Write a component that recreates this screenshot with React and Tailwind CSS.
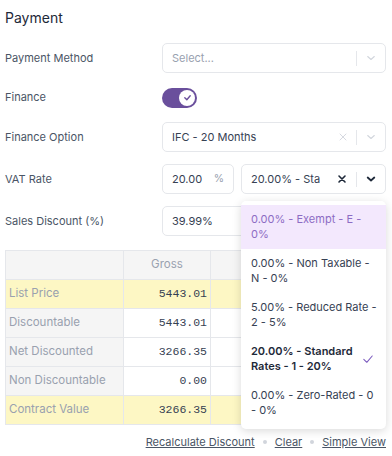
import React from 'react';

const rows = [
  { label: 'List Price', gross: '5443.01', highlight: true },
  { label: 'Discountable', gross: '5443.01' },
  { label: 'Net Discounted', gross: '3266.35' },
  { label: 'Non Discountable', gross: '0.00' },
  { label: 'Contract Value', gross: '3266.35', highlight: true },
];

const vatOptions = [
  { label: '0.00% - Exempt - E - 0%', active: true },
  { label: '0.00% - Non Taxable - N - 0%' },
  { label: '5.00% - Reduced Rate - 2 - 5%' },
  { label: '20.00% - Standard Rates - 1 - 20%', selected: true },
  { label: '0.00% - Zero-Rated - 0 - 0%' },
];

function Chevron({ dark }) {
  return (
    <svg width="12" height="12" viewBox="0 0 20 20" className={dark ? 'text-gray-800' : 'text-gray-300'}>
      <path
        d="M4.5 7.5 L10 12.5 L15.5 7.5"
        fill="none"
        stroke="currentColor"
        strokeWidth={dark ? 3 : 1.8}
        strokeLinecap="round"
        strokeLinejoin="round"
      />
    </svg>
  );
}

function Cross({ dark }) {
  return (
    <svg width="10" height="10" viewBox="0 0 20 20" className={dark ? 'text-gray-800' : 'text-gray-300'}>
      <path
        d="M4 4 L16 16 M16 4 L4 16"
        fill="none"
        stroke="currentColor"
        strokeWidth={dark ? 3.2 : 1.8}
        strokeLinecap="round"
      />
    </svg>
  );
}

function SelectBox({ value, placeholder, clearable, open, className = '' }) {
  return (
    <div className={`flex h-[30px] min-w-0 items-center rounded-[5px] border border-gray-200 bg-white pl-[9px] ${className}`}>
      <div className={`min-w-0 flex-1 overflow-hidden whitespace-nowrap text-[11px] ${value ? 'text-gray-700' : 'text-gray-400'}`}>
        {value || placeholder}
      </div>
      {clearable && (
        <div className={`flex shrink-0 items-center justify-center ${open ? 'w-[32px] pl-[4px]' : 'w-[26px]'}`}>
          <Cross dark={open} />
        </div>
      )}
      <div className="h-[15px] w-px shrink-0 bg-gray-200" />
      <div className="flex w-[28px] shrink-0 items-center justify-center">
        <Chevron dark={open} />
      </div>
    </div>
  );
}

function Field({ label, children, h = 'h-[30px]' }) {
  return (
    <div className={`flex items-center ${h}`}>
      <div className="w-[157px] shrink-0 text-[11px] text-gray-600">{label}</div>
      <div className="flex min-w-0 flex-1 items-center">{children}</div>
    </div>
  );
}

export default function App() {
  return (
    <div
      className="h-[456px] w-[392px] overflow-hidden bg-white pl-[5px] pr-[6px] pt-[6px]"
      style={{ fontFamily: 'Inter, "Noto Sans", sans-serif' }}
    >
      <h2 className="mb-[13px] text-[14px] leading-6 text-gray-800">Payment</h2>

      <div className="flex flex-col gap-3">
        <Field label="Payment Method">
          <SelectBox placeholder="Select..." className="w-full" />
        </Field>

        <Field label="Finance" h="h-[25px]">
          <div className="flex h-[20px] w-[35px] items-center justify-end rounded-full bg-[#6a4f9c] pr-[2px]">
            <div className="flex h-[16px] w-[16px] items-center justify-center rounded-full bg-white">
              <svg width="9" height="9" viewBox="0 0 20 20">
                <path d="M4 10.5 L8.5 15 L16 6" fill="none" stroke="#6a4f9c" strokeWidth="3" strokeLinecap="round" strokeLinejoin="round" />
              </svg>
            </div>
          </div>
        </Field>

        <Field label="Finance Option">
          <SelectBox value="IFC - 20 Months" clearable className="w-full" />
        </Field>

        <Field label="VAT Rate">
          <div className="relative flex w-full min-w-0 items-center gap-[7px]">
            <div className="flex h-[30px] w-[72px] shrink-0 items-center rounded-[5px] border border-gray-200 bg-white pl-[9px] pr-[9px]">
              <span className="flex-1 text-[11px] text-gray-700">20.00</span>
              <span className="text-[10.5px] text-gray-400">%</span>
            </div>
            <SelectBox value="20.00% - Sta" clearable open className="flex-1" />

            <div className="absolute left-[79px] right-0 top-[37px] z-10 rounded-[5px] bg-white py-[4px] shadow-[0_2px_10px_rgba(0,0,0,0.15)]">
              {vatOptions.map((o) => (
                <div
                  key={o.label}
                  className={`flex h-[44px] items-center pl-[10px] pr-[9px] text-[11px] leading-[15px] ${
                    o.active ? 'bg-[#f3e8fd] text-[#8d6cc4]' : 'text-gray-700'
                  } ${o.selected ? 'font-semibold text-gray-800' : ''}`}
                >
                  <span className="min-w-0 flex-1">{o.label}</span>
                  {o.selected && (
                    <svg className="ml-[6px] mr-[3px] shrink-0" width="12" height="12" viewBox="0 0 20 20">
                      <path d="M3 10.5 L8 15.5 L17 5" fill="none" stroke="#7c5cbf" strokeWidth="1.8" strokeLinecap="round" strokeLinejoin="round" />
                    </svg>
                  )}
                </div>
              ))}
            </div>
          </div>
        </Field>

        <Field label="Sales Discount (%)">
          <div className="flex h-[30px] w-full items-center rounded-[5px] border border-gray-200 bg-white pl-[9px]">
            <span className="text-[11px] text-gray-700">39.99%</span>
          </div>
        </Field>
      </div>

      <table className="mt-[14px] w-full border-collapse text-[11.5px]">
        <thead>
          <tr className="h-[29px] bg-[#f5f5f5]">
            <th className="w-[118px] border border-gray-200" />
            <th className="w-[87px] border border-gray-200 font-normal text-gray-400">Gross</th>
            <th className="border border-gray-200" />
          </tr>
        </thead>
        <tbody>
          {rows.map((r) => (
            <tr key={r.label} className={`h-[29px] ${r.highlight ? 'bg-[#fdf7c4]' : ''}`}>
              <td className={`border border-gray-200 pl-[3px] text-gray-400 ${r.highlight ? '' : 'bg-[#f5f5f5]'}`}>{r.label}</td>
              <td className="border border-gray-200 pr-[3px] text-right font-mono text-[11.5px] text-gray-700">{r.gross}</td>
              <td className="border border-gray-200" />
            </tr>
          ))}
        </tbody>
      </table>

      <div className="mt-[9px] flex items-center justify-end gap-[8px] text-[11px] text-gray-600">
        <span className="underline">Recalculate Discount</span>
        <span className="h-[4px] w-[4px] rounded-full bg-gray-300" />
        <span className="underline">Clear</span>
        <span className="h-[4px] w-[4px] rounded-full bg-gray-300" />
        <span className="underline">Simple View</span>
      </div>
    </div>
  );
}
